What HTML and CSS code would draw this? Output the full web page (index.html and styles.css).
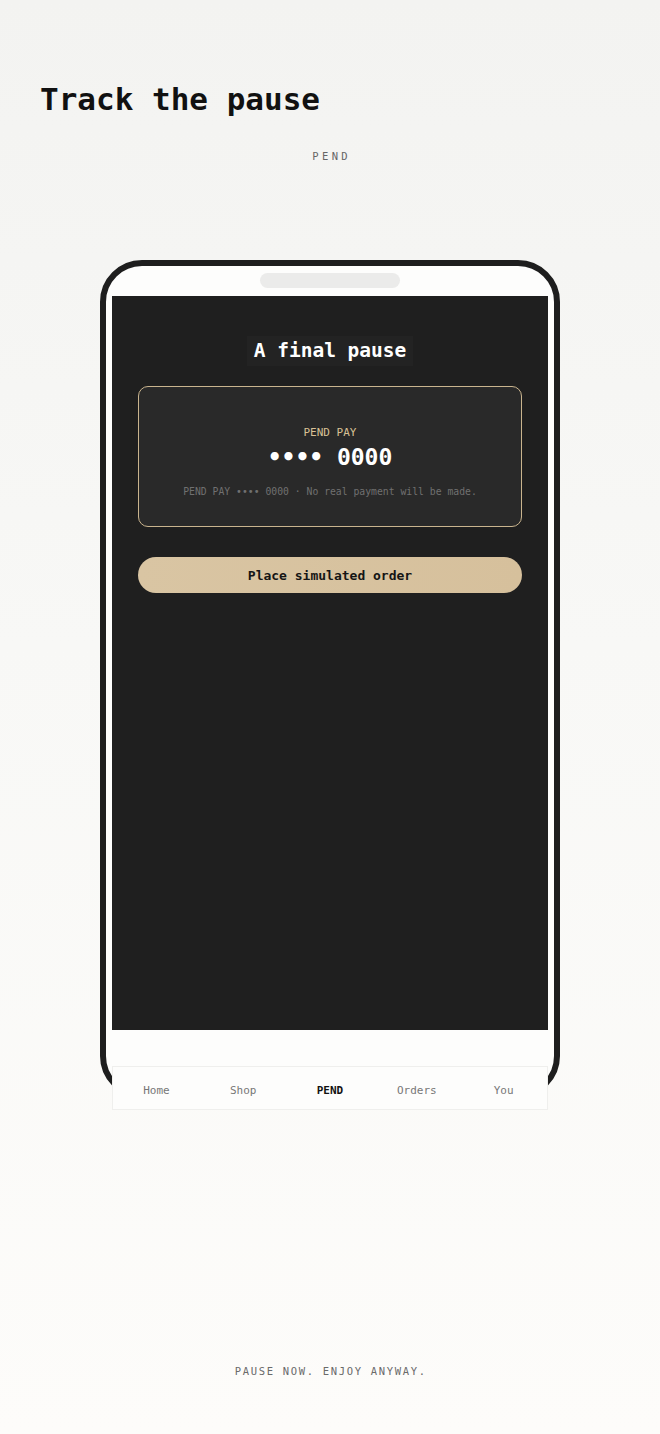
FILE: index.html
```html
<!DOCTYPE html>
<html lang="en">
<head>
<meta charset="utf-8">
<title>Track the pause</title>
<link rel="stylesheet" href="styles.css">
</head>
<body>
<div class="page">
  <header class="top">
    <h1 class="title">Track the pause</h1>
    <div class="brand">PEND</div>
  </header>

  <div class="phone">
    <div class="notch"></div>
    <main class="screen">
      <h2 class="screen-title">A final pause</h2>
      <section class="card">
        <div class="card-label">PEND PAY</div>
        <div class="card-number">•••• 0000</div>
        <div class="card-note">PEND PAY •••• 0000 · No real payment will be made.</div>
      </section>
      <button class="order-btn">Place simulated order</button>
    </main>
    <nav class="tabbar">
      <span class="tab">Home</span>
      <span class="tab">Shop</span>
      <span class="tab active">PEND</span>
      <span class="tab">Orders</span>
      <span class="tab">You</span>
    </nav>
  </div>

  <footer class="foot">PAUSE NOW. ENJOY ANYWAY.</footer>
</div>
</body>
</html>
```

FILE: styles.css
```css
* { box-sizing: border-box; }

html, body {
  margin: 0;
  padding: 0;
}

body {
  font-family: "DejaVu Sans Mono", "Liberation Mono", monospace;
  background: linear-gradient(180deg, #f3f3f1 0%, #f8f8f6 45%, #fdfcfa 100%);
  min-height: 1434px;
  color: #111;
}

.page {
  width: 660px;
  min-height: 1434px;
  display: flex;
  flex-direction: column;
  align-items: center;
}

.top {
  width: 100%;
  padding: 80px 40px 0;
}

.title {
  margin: 0;
  font-size: 31px;
  line-height: 38px;
  font-weight: bold;
  color: #111;
  letter-spacing: 0;
}

.brand {
  margin-top: 31px;
  text-align: center;
  font-size: 10.5px;
  line-height: 14px;
  letter-spacing: 0.32em;
  padding-left: 0.32em;
  color: #666;
}

.phone {
  position: relative;
  margin-top: 97px;
  width: 460px;
  height: 838px;
  border: 6px solid #1e1e1e;
  border-radius: 42px;
  background: #fdfdfc;
  padding: 7px 6px 0;
  display: flex;
  flex-direction: column;
  align-items: center;
}

.notch {
  width: 140px;
  height: 15px;
  border-radius: 8px;
  background: #ebebea;
}

.screen {
  margin-top: 8px;
  width: 436px;
  height: 734px;
  background: #1f1f1f;
  padding: 40px 26px 0;
  display: flex;
  flex-direction: column;
  align-items: center;
}

.screen-title {
  margin: 0;
  padding: 3px 7px;
  background: #232323;
  color: #fff;
  font-size: 19.5px;
  line-height: 24px;
  font-weight: bold;
}

.card {
  margin-top: 20px;
  width: 384px;
  height: 141px;
  border: 1px solid #c9b48e;
  border-radius: 10px;
  background: #292929;
  display: flex;
  flex-direction: column;
  align-items: center;
  padding-top: 39px;
}

.card-label {
  font-size: 11px;
  line-height: 14px;
  color: #d8c196;
}

.card-number {
  margin-top: 4px;
  font-size: 23px;
  line-height: 26px;
  font-weight: bold;
  color: #fff;
}

.card-note {
  margin-top: 16px;
  font-size: 9.75px;
  line-height: 12px;
  color: #707070;
}

.order-btn {
  margin-top: 30px;
  width: 384px;
  height: 36px;
  border: none;
  border-radius: 18px;
  background: linear-gradient(90deg, #d9c5a3, #d6c09c);
  color: #151515;
  font-family: "DejaVu Sans Mono", "Liberation Mono", monospace;
  font-size: 13px;
  font-weight: bold;
  padding: 0;
}

.tabbar {
  position: absolute;
  left: 6px;
  top: 800px;
  width: 436px;
  height: 44px;
  background: #fdfdfc;
  border: 1px solid #efefed;
  display: flex;
  align-items: center;
  padding-top: 4px;
}

.tab {
  flex: 1;
  text-align: center;
  font-size: 11px;
  color: #777;
}

.tab.active {
  color: #111;
  font-weight: bold;
}

.foot {
  margin-top: 266px;
  font-size: 10.5px;
  line-height: 14px;
  letter-spacing: 0.16em;
  padding-left: 0.16em;
  color: #6a6a6a;
}
```
